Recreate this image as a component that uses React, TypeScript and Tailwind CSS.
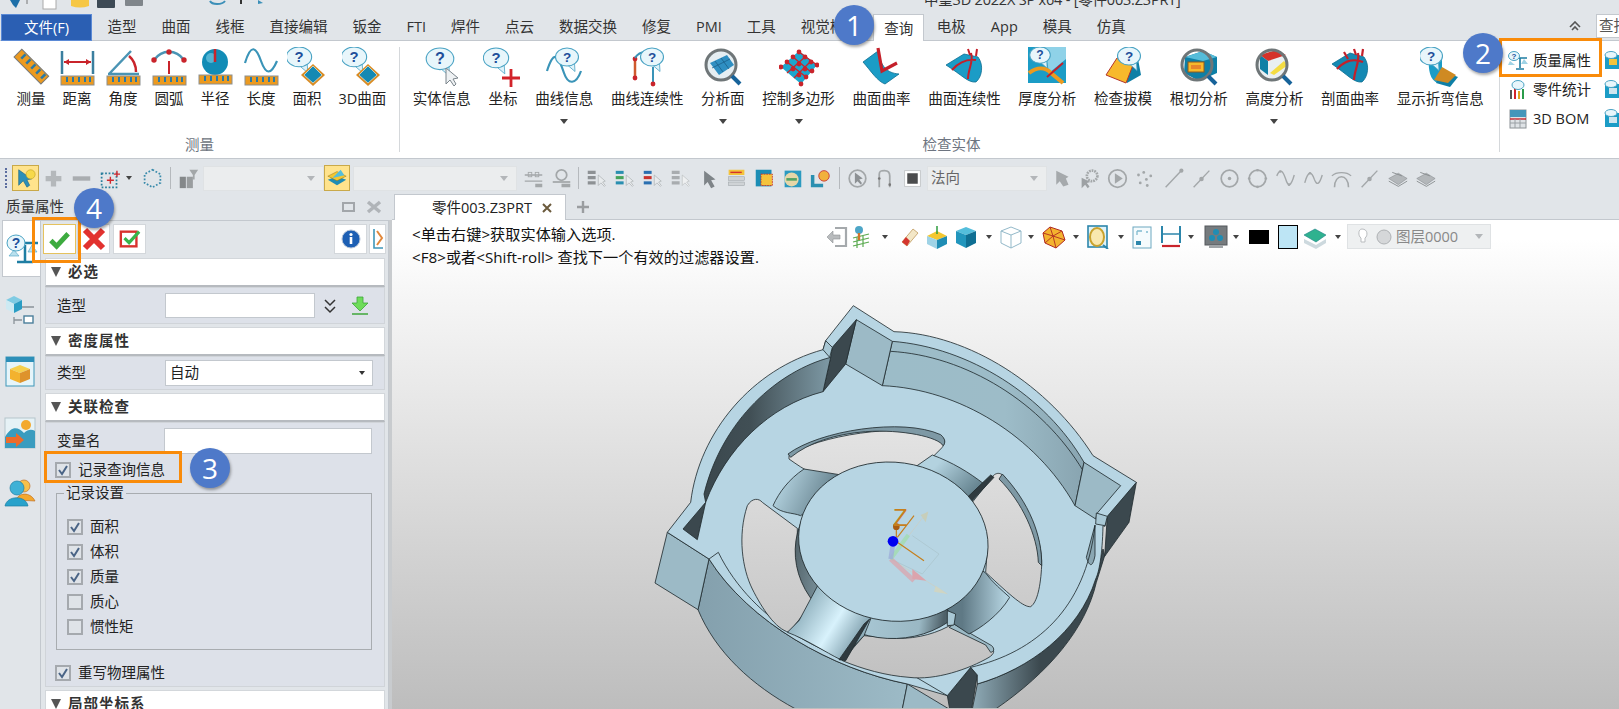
import React from "react";

const Bubble = ({ x = 4, y = 1, r = 10 }: { x?: number; y?: number; r?: number }) => (
  <g>
    <path d={`M${x + r * 1.1} ${y + r * 1.75} l${r * 0.7} ${r * 0.6} l-${r * 0.05} -${r * 0.8} Z`} fill="#dff2f9" stroke="#4aa3c4" strokeWidth="0.8" />
    <ellipse cx={x + r} cy={y + r * 0.9} rx={r * 1.15} ry={r * 0.9} fill="#e8f6fb" stroke="#4aa3c4" strokeWidth="1.1" />
    <text x={x + r} y={y + r * 1.35} textAnchor="middle" fontSize={r * 1.35} fontWeight="700" fill="#214f9a" fontFamily="Liberation Sans, sans-serif">?</text>
  </g>
);
const Ruler = ({ y = 29 }: { y?: number }) => (
  <g>
    <rect x="4" y={y} width="33" height="9" fill="#ec9a1f" stroke="#8c8f90" strokeWidth="1" />
    {[9, 15, 21, 27, 32].map((x) => <rect key={x} x={x} y={y + 1} width="2" height="5" fill="#2879a8" />)}
  </g>
);
const Diamond = () => (
  <g>
    <polygon points="26,17 38,28 26,39 14,28" fill="#d98c24" />
    <polygon points="26,19 35,28 26,36 17,28" fill="#1489b3" stroke="#e7f6fb" strokeWidth="0.6" />
  </g>
);
const Magnifier = ({ children }: { children?: React.ReactNode }) => (
  <g>
    {children}
    <circle cx="18" cy="18" r="15" fill="none" stroke="#6f7678" strokeWidth="3" />
    <path d="M29 29 L37 37" stroke="#17639a" strokeWidth="4" />
  </g>
);

const ribbonIcons: Record<string, React.ReactNode> = {
  measure: (<g transform="rotate(45 20 20)"><rect x="1" y="14" width="38" height="11" fill="#ec9a1f" stroke="#77797a" />{[6, 13, 20, 27, 34].map((x) => <rect key={x} x={x} y="15" width="2.5" height="6" fill="#2879a8" />)}</g>),
  dist: (<g><path d="M5 4 V27 M36 4 V27" stroke="#3b7f9f" strokeWidth="2.5" /><path d="M7 15 H34" stroke="#c9242b" strokeWidth="2" /><path d="M7 15 l5 -3 v6 Z M34 15 l-5 -3 v6 Z" fill="#c9242b" /><Ruler /></g>),
  angle: (<g><path d="M6 27 L28 4 M5 27 H36" stroke="#4a94b4" strokeWidth="2.5" fill="none" /><path d="M26 9 C32 14 33 20 33 25" stroke="#c9242b" strokeWidth="2.5" fill="none" /><Ruler /></g>),
  arc: (<g><path d="M5 13 C13 2 27 2 35 13" stroke="#4a94b4" strokeWidth="2.5" fill="none" /><circle cx="5" cy="13" r="2.7" fill="#c9242b" /><circle cx="35" cy="13" r="2.7" fill="#c9242b" /><circle cx="20" cy="5" r="2.7" fill="#c9242b" /><path d="M20 27 V14" stroke="#c9242b" strokeWidth="2" /><Ruler /></g>),
  radius: (<g><circle cx="20" cy="15" r="13" fill="#128cb6" /><circle cx="16" cy="11" r="5" fill="#7fd0e8" opacity="0.6" /><path d="M20 15 V2" stroke="#c9242b" strokeWidth="2.5" /><Ruler y={28} /></g>),
  length: (<g><path d="M4 16 C10 -4 15 0 20 14 C25 28 30 28 36 14" stroke="#3a94b8" strokeWidth="2.2" fill="none" /><Ruler /></g>),
  area: (<g><Bubble x={1} y={0} r={11} /><Diamond /></g>),
  info: (<g><Bubble x={6} y={1} r={12} /><path d="M24 21 V37 L28 33 L32 39 L34 37 L31 32 L36 31 Z" fill="#eef1f3" stroke="#7b858c" strokeWidth="1" /></g>),
  coord: (<g><Bubble x={2} y={1} r={11} /><path d="M28 22 V40 M19 31 H37" stroke="#d2232a" strokeWidth="2.8" /></g>),
  curve: (<g><path d="M3 24 C10 2 14 8 20 26 C24 38 32 38 37 24" stroke="#3a94b8" strokeWidth="2.2" fill="none" /><Bubble x={13} y={1} r={10} /></g>),
  curvec: (<g><path d="M8 14 V30" stroke="#cf5a2e" strokeWidth="2.5" /><circle cx="8" cy="12" r="2.4" fill="#c9242b" /><circle cx="8" cy="31" r="2.4" fill="#c9242b" /><path d="M8 11 C12 5 16 5 18 5 M26 20 V36" stroke="#3a94b8" strokeWidth="2" fill="none" /><circle cx="26" cy="37" r="2.4" fill="#c9242b" /><Bubble x={15} y={1} r={10} /></g>),
  anaface: (<Magnifier><circle cx="18" cy="18" r="14" fill="#e5eef2" /><path d="M7 16 L24 8 L31 18 L16 28 Z" fill="#2f8fc2" /><path d="M12 14 L20 25 M18 11 L26 22 M9 21 L27 12" stroke="#1b5f8a" strokeWidth="0.8" /></Magnifier>),
  polygon: (<g><path d="M2 20 L20 4 L38 18 L22 37 Z" fill="#1ba7cf" /><path d="M8 15 L27 30 M14 10 L32 25 M20 5 L38 18 M26 10 L8 26 M32 14 L15 31" stroke="#c9242b" strokeWidth="1.3" />{[[2,20],[8,15],[14,10],[20,5],[14,22],[20,17],[26,10],[20,28],[26,22],[32,15],[27,30],[33,24],[38,18],[22,37]].map(([x,y],i)=><circle key={i} cx={x} cy={y} r="2.4" fill="#c9242b" />)}</g>),
  curvature: (<g><path d="M2 15 L17 4 C20 20 26 26 38 27 L24 37 C16 34 10 24 2 15 Z" fill="#1b9cc6" stroke="#0d6d90" strokeWidth="0.8" /><path d="M17 1 L21 24 L36 16" stroke="#c4202a" strokeWidth="3.2" fill="none" /></g>),
  surfc: (<g><path d="M2 18 L20 7 L34 10 C40 18 38 30 32 35 C24 36 18 28 2 18 Z" fill="#1b9cc6" stroke="#0d6d90" strokeWidth="0.8" /><path d="M8 23 C16 14 24 12 32 13 M24 32 C24 22 30 14 27 6 M24 2 L26 8 M33 2 L32 9" stroke="#c4202a" strokeWidth="2" fill="none" /></g>),
  thick: (<g><rect x="1" y="0" width="38" height="36" fill="#1b9cc6" /><path d="M18 0 H39 V12 L22 26 Z" fill="#8fd2e8" /><Bubble x={4} y={0} r={9} /><path d="M2 26 C10 20 18 20 24 26 L36 36" stroke="#ec9a1f" strokeWidth="4" fill="none" /><path d="M20 30 L36 16" stroke="#c4202a" strokeWidth="2" /></g>),
  draft: (<g><path d="M14 8 L35 12 L38 28 L24 36 Z" fill="#0e7fa6" /><polygon points="14,11 30,18 23,36 3,28" fill="#f7b92c" stroke="#b5342a" strokeWidth="1" /><Bubble x={16} y={0} r={10} /></g>),
  under: (<Magnifier><path d="M6 10 L24 4 L38 10 V26 L20 34 L5 26 Z" fill="#0e7fa6" /><path d="M6 10 L24 14 L38 10 L24 4 Z" fill="#55bcd9" /><rect x="9" y="15" width="16" height="10" fill="#f7b92c" stroke="#8f5b1d" /><rect x="12" y="18" width="10" height="4" fill="#e9852a" /></Magnifier>),
  height: (<Magnifier><circle cx="18" cy="18" r="14" fill="#e9eff2" /><path d="M6 8 L22 3 L32 8 L14 14 Z" fill="#d5322a" /><path d="M6 8 L14 14 V28 L6 22 Z" fill="#0e7fa6" /><polygon points="16,26 30,14 34,18 20,28" fill="#f4dc42" /></Magnifier>),
  section: (<g><path d="M2 17 L20 6 L34 10 C40 18 38 30 32 35 C24 36 18 28 2 17 Z" fill="#1489b3" stroke="#0d6d90" strokeWidth="0.8" /><path d="M7 22 C16 12 26 12 33 15 M24 33 C24 24 30 15 28 6 M24 2 L26 8 M33 2 L32 9 M14 5 L18 12" stroke="#c4202a" strokeWidth="2.2" fill="none" /></g>),
  bend: (<g><path d="M9 12 H22 V24 L18 36 C10 34 8 22 9 12 Z" fill="#1b9cc6" /><path d="M22 24 L38 30 L30 40 L16 36 Z" fill="#0e7fa6" /><path d="M22 20 L36 28 L28 36 L14 33 Z" fill="#cf8a22" /><Bubble x={1} y={0} r={10} /></g>),
};

const ribbonItems: { t: string; i: string; arrow?: boolean }[] = [
  { t: "实体信息", i: "info" }, { t: "坐标", i: "coord" }, { t: "曲线信息", i: "curve", arrow: true }, { t: "曲线连续性", i: "curvec" },
  { t: "分析面", i: "anaface", arrow: true }, { t: "控制多边形", i: "polygon", arrow: true }, { t: "曲面曲率", i: "curvature" }, { t: "曲面连续性", i: "surfc" },
  { t: "厚度分析", i: "thick" }, { t: "检查拔模", i: "draft" }, { t: "根切分析", i: "under" }, { t: "高度分析", i: "height", arrow: true },
  { t: "剖面曲率", i: "section" }, { t: "显示折弯信息", i: "bend" },
];
const measureItems = [
  { t: "测量", i: "measure" }, { t: "距离", i: "dist" }, { t: "角度", i: "angle" }, { t: "圆弧", i: "arc" },
  { t: "半径", i: "radius" }, { t: "长度", i: "length" }, { t: "面积", i: "area" }, { t: "3D曲面", i: "area" },
];

const RibbonBtn = ({ t, i, arrow, px }: { t: string; i: string; arrow?: boolean; px: string }) => (
  <div className={`flex flex-col items-center ${px}`}>
    <div className="w-0 h-10 flex justify-center">
      <svg viewBox="0 0 40 40" className="w-10 h-10 shrink-0">{ribbonIcons[i]}</svg>
    </div>
    <span className="mt-[2px] h-5 leading-5 text-[14.5px] text-[#222] whitespace-nowrap">{t}</span>
    {arrow && <span className="mt-[10px] w-0 h-0 border-x-[4px] border-x-transparent border-t-[5px] border-t-[#444]" />}
  </div>
);

const Arrow = () => <span className="w-0 h-0 border-x-[3.5px] border-x-transparent border-t-[4px] border-t-[#444]" />;

const g = "#a3a7a9";
const toolIcons: Record<string, React.ReactNode> = {
  plus: <path d="M12 3 V21 M3 12 H21" stroke="#b4b8bb" strokeWidth="6" />,
  minus: <path d="M2 12 H22" stroke="#a9adb0" strokeWidth="5" />,
  dotted: <g><rect x="3" y="6" width="17" height="16" fill="none" stroke="#2a7f9d" strokeWidth="2" strokeDasharray="2 2" /><path d="M9 14 H17 M13 10 V18 M17 7 H24 M20.5 3 V10" stroke="#cf2a2f" strokeWidth="1.6" /></g>,
  hex: <polygon points="12,2 21,7 21,17 12,22 3,17 3,7" fill="none" stroke="#3a8bab" strokeWidth="2" strokeDasharray="2 2" />,
  filter: <g><rect x="2" y="10" width="7" height="13" fill="#84888a" /><rect x="10" y="10" width="7" height="13" fill="#999d9f" /><path d="M13 2 H23 L19 8 V13 H17 V8 Z" fill={g} /></g>,
  slider: <g><path d="M2 8 H22 M2 15 H22" stroke={g} strokeWidth="1.5" /><rect x="6" y="5" width="4" height="5" fill="none" stroke={g} /><rect x="14" y="5" width="4" height="5" fill="none" stroke={g} /><rect x="14" y="18" width="8" height="4" fill={g} /></g>,
  clock: <g><circle cx="12" cy="8" r="6" fill="none" stroke={g} strokeWidth="2" /><path d="M2 16 H22" stroke={g} strokeWidth="2" /><rect x="12" y="18" width="10" height="4" fill={g} /></g>,
  s1: <g><path d="M2 5 H11 M2 11 H11 M2 17 H11" stroke="#8d9194" strokeWidth="3.5" /><path d="M14 8 V20 L17 17 L21 21 L22 20 L19 16 L22 15 Z" fill="#e8ebed" stroke={g} strokeWidth="0.7" /></g>,
  s2: <g><path d="M2 5 H11" stroke="#2a8fb0" strokeWidth="3.5" /><path d="M2 11 H11" stroke="#46a35a" strokeWidth="3.5" /><path d="M2 17 H11" stroke="#2a8fb0" strokeWidth="3.5" /><path d="M14 8 V20 L17 17 L21 21 L22 20 L19 16 L22 15 Z" fill="#e8ebed" stroke={g} strokeWidth="0.7" /></g>,
  s3: <g><path d="M2 5 H11" stroke="#2a6fb0" strokeWidth="3.5" /><path d="M2 11 H11" stroke="#c9342f" strokeWidth="3.5" /><path d="M2 17 H11" stroke="#2a6fb0" strokeWidth="3.5" /><path d="M14 8 V20 L17 17 L21 21 L22 20 L19 16 L22 15 Z" fill="#e8ebed" stroke={g} strokeWidth="0.7" /></g>,
  s4: <g><path d="M2 5 H11 M2 11 H11 M2 17 H11" stroke="#a8acaf" strokeWidth="3.5" /><path d="M14 8 V20 L17 17 L21 21 L22 20 L19 16 L22 15 Z" fill="#eef0f1" stroke="#b7babc" strokeWidth="0.7" /></g>,
  cursor: <path d="M7 3 V20 L11 16 L15 23 L19 21 L15 14 L20 13 Z" fill="#7e8488" />,
  table: <g><rect x="3" y="2" width="18" height="6" fill="#f4c33c" /><path d="M5 5 H18" stroke="#d4332d" strokeWidth="1.6" /><rect x="3" y="10" width="18" height="4" fill="#cfd3d6" stroke="#9aa0a4" strokeWidth="0.6" /><rect x="3" y="16" width="18" height="4" fill="#cfd3d6" stroke="#9aa0a4" strokeWidth="0.6" /></g>,
  box1: <g><rect x="2" y="2" width="18" height="19" fill="#1b8db5" /><rect x="8" y="7" width="13" height="13" fill="#f4c33c" stroke="#c9342f" strokeDasharray="2 1" /></g>,
  box2: <g><rect x="3" y="3" width="19" height="19" fill="#2b9ac0" /><circle cx="11" cy="13" r="8" fill="#e6d7a8" /><path d="M5 13 H17" stroke="#53a364" strokeWidth="3" /></g>,
  box3: <g><path d="M3 8 V20 H15" stroke="#2a8fb0" strokeWidth="4" fill="none" /><circle cx="16" cy="9" r="6" fill="#f1b13c" stroke="#c9342f" /></g>,
  compass: <g><circle cx="12" cy="12" r="9.5" fill="none" stroke={g} strokeWidth="2" /><path d="M9 5 V18 L12 15 L16 19 L17 17 L14 13 L18 12 Z" fill="#8d9194" /></g>,
  bracket: <g><path d="M6 22 V7 C6 3 9 3 12 3 C16 3 18 5 18 9 V22" fill="none" stroke={g} strokeWidth="2" /><circle cx="6" cy="12" r="1.5" fill="#777" /><circle cx="18" cy="19" r="1.5" fill="#777" /></g>,
  stop: <g><rect x="3" y="3" width="18" height="18" fill="#fff" stroke="#c1c4c6" /><rect x="6" y="6" width="12" height="12" fill="#4b4c4d" /></g>,
  arrowHand: <path d="M6 3 V19 L10 15 L14 21 L20 19 L17 12 L20 10 Z" fill="#a5a9ac" />,
  gear: <g><circle cx="15" cy="9" r="6" fill="none" stroke={g} strokeWidth="3" strokeDasharray="2 1" /><path d="M3 11 V23 L7 19 L10 23 L12 21 L9 17 L13 16 Z" fill="#9da1a4" /></g>,
  play: <g><circle cx="12" cy="12" r="10" fill="none" stroke={g} strokeWidth="2" /><path d="M9 6 L18 12 L9 18 Z" fill={g} /></g>,
  dots: <g>{[[4, 8], [10, 5], [18, 9], [6, 17], [13, 13], [14, 20]].map(([x, y], i) => <circle key={i} cx={x} cy={y} r="1.6" fill={g} />)}</g>,
  line: <g><path d="M3 22 L20 4" stroke={g} strokeWidth="1.6" /><circle cx="21" cy="3" r="2.4" fill={g} /></g>,
  midline: <g><path d="M3 22 L21 3" stroke={g} strokeWidth="1.6" /><circle cx="12" cy="12.5" r="2.6" fill={g} /></g>,
  center: <g><circle cx="12" cy="12" r="9.5" fill="none" stroke={g} strokeWidth="2" /><circle cx="12" cy="12" r="2" fill={g} /></g>,
  circ: <g><circle cx="12" cy="12" r="9.5" fill="none" stroke={g} strokeWidth="2" /><circle cx="12" cy="2.5" r="1.5" fill={g} /><circle cx="2.5" cy="12" r="1.5" fill={g} /><circle cx="21.5" cy="12" r="1.5" fill={g} /><circle cx="12" cy="21.5" r="1.5" fill={g} /></g>,
  wave: <g><path d="M2 9 C6 0 9 3 12 12 C15 22 18 22 22 8" fill="none" stroke={g} strokeWidth="1.6" /><circle cx="6" cy="4" r="1.5" fill={g} /><circle cx="16" cy="19" r="1.5" fill={g} /></g>,
  wave2: <g><path d="M2 17 C6 2 10 4 13 13 C16 21 19 18 22 8" fill="none" stroke={g} strokeWidth="1.6" /><circle cx="8" cy="6" r="1.5" fill={g} /></g>,
  archT: <g><path d="M4 22 C4 6 20 6 20 22" fill="none" stroke={g} strokeWidth="1.8" /><path d="M1 9 C6 4 18 4 23 9" fill="none" stroke={g} strokeWidth="1.5" /></g>,
  pages: <g><path d="M2 12 L13 6 L23 12 L13 19 Z" fill="#b3b7ba" stroke="#85898c" strokeWidth="0.6" /><path d="M2 15 L13 21 L23 15" fill="none" stroke="#85898c" /><path d="M6 5 L17 9" stroke="#85898c" /></g>,
};
const Tool = ({ i, w = "w-[28px]" }: { i: string; w?: string }) => (
  <div className={`${w} shrink-0 flex justify-center`}>
    <svg viewBox="0 0 24 24" className="w-[21px] h-[21px]">{toolIcons[i]}</svg>
  </div>
);
const Sep = ({ w }: { w: string }) => (
  <div className={`${w} shrink-0 flex justify-center`}><div className="w-px h-[22px] bg-[#b5b9bd]" /></div>
);
const Combo = ({ w, children }: { w: string; children?: React.ReactNode }) => (
  <div className={`${w} shrink-0 h-[25px] bg-[#ebedee] border border-[#dfe2e4] flex items-center justify-between pl-[3px] pr-[8px]`}>
    <span className="text-[14.5px] text-[#666]">{children}</span>
    <span className="w-0 h-0 border-x-[4px] border-x-transparent border-t-[5px] border-t-[#b3b6b9]" />
  </div>
);

const vtIcons: Record<string, React.ReactNode> = {
  door: <g><path d="M10 3 H21 V21 H10" fill="none" stroke="#a5a9ac" strokeWidth="2.2" /><path d="M2 12 L8 6 V10 H15 V14 H8 V18 Z" fill="#b8bbbd" stroke="#8e9295" strokeWidth="0.6" /></g>,
  person: <g><path d="M4 13 L20 9 M4 17 L20 13 M4 21 L20 17 M8 12 V23 M14 11 V22" stroke="#5aaa4f" strokeWidth="1.2" /><circle cx="10" cy="5" r="4" fill="#4ea6c7" /><path d="M10 8 V15" stroke="#d0752a" strokeWidth="2.4" /></g>,
  eraser: <g><path d="M5 17 L16 4 L21 8 L10 21 Z" fill="#f3e7c7" stroke="#b78e4a" strokeWidth="0.7" /><path d="M5 17 L9 12 L13 16 L10 21 Z" fill="#d4352e" /></g>,
  ycube: <g><polygon points="12,6 22,11 12,15 2,11" fill="#f4c72f" /><polygon points="2,11 12,15 12,24 2,19" fill="#9fd3e6" /><polygon points="22,11 12,15 12,24 22,19" fill="#1f8db4" /><path d="M12 1 V9" stroke="#2e9c3e" strokeWidth="1.5" /></g>,
  bcube: <g><polygon points="12,2 22,6 12,10 2,6" fill="#54bedc" /><polygon points="2,6 12,10 12,23 2,18" fill="#2296bd" /><polygon points="22,6 12,10 12,23 22,18" fill="#0f6f93" /></g>,
  wire: <g><polygon points="12,2 22,6 22,18 12,23 2,18 2,6" fill="#fff" stroke="#93b9c9" /><path d="M2 6 L12 10 L22 6 M12 10 V23" stroke="#93b9c9" fill="none" /></g>,
  poly: <g><polygon points="8,2 20,6 23,15 14,23 3,18 1,8" fill="#f3b32f" stroke="#b02a22" /><path d="M11 11 L8 2 M11 11 L20 6 M11 11 L23 15 M11 11 L14 23 M11 11 L3 18 M11 11 L1 8" stroke="#b02a22" strokeWidth="0.9" /></g>,
  search: <g><rect x="2" y="1" width="19" height="21" fill="#dff3fa" stroke="#2c86ab" strokeWidth="1.6" /><ellipse cx="11" cy="12" rx="7" ry="9" fill="#f9e8ae" stroke="#c9a22d" strokeWidth="2" /><path d="M17 20 L22 24" stroke="#2c86ab" strokeWidth="2" /></g>,
  doc: <g><rect x="3" y="2" width="18" height="21" fill="#f5fbfd" stroke="#6ca8c0" /><path d="M7 6 H12 M16 7 H18 M7 6 V10" stroke="#7fbad0" strokeWidth="1.3" /><rect x="6" y="16" width="5" height="4" fill="#2c86ab" /></g>,
  dim: <g><path d="M3 1 V18 M21 1 V18" stroke="#2c86ab" strokeWidth="2" /><path d="M4 9 H20" stroke="#2c86ab" strokeWidth="1.5" /><path d="M3 21 H21" stroke="#c9242b" strokeWidth="2.2" /></g>,
  monitor: <g><rect x="1" y="1" width="22" height="19" fill="#767b7e" stroke="#55595c" /><circle cx="12" cy="7" r="3" fill="#1f8db4" /><circle cx="8" cy="13" r="3" fill="#1f8db4" /><circle cx="16" cy="13" r="3" fill="#1f8db4" /><rect x="5" y="20" width="14" height="3" fill="#a0a4a7" /></g>,
  layers: <g><path d="M1 14 L13 20 L23 14 V18 L13 24 L1 18 Z" fill="#cdd9de" /><path d="M1 10 L12 4 L23 10 L13 17 Z" fill="#2fb28f" stroke="#1e7f87" strokeWidth="0.6" /></g>,
};
const VT = ({ i, w }: { i: string; w: string }) => (
  <div className={`${w} shrink-0 flex justify-center`}>
    <svg viewBox="0 0 24 24" className="w-[24px] h-[24px] shrink-0">{vtIcons[i]}</svg>
  </div>
);
const VA = ({ w }: { w: string }) => <div className={`${w} shrink-0 flex justify-center`}><Arrow /></div>;

const Section = ({ title }: { title: string }) => (
  <div className="ml-[4px] w-[340px]">
    <div className="h-[29px] bg-white border border-[#d3d7db] border-b-2 border-b-[#b6babf] flex items-center pl-[5px]">
      <span className="w-0 h-0 border-x-[5.5px] border-x-transparent border-t-[10px] border-t-[#555] mr-[7px]" />
      <span className="text-[14.5px] font-bold tracking-[1px] text-[#333]">{title}</span>
    </div>
  </div>
);

const Check = ({ on = true }: { on?: boolean }) => (
  <span className="w-4 h-4 shrink-0 border-2 border-[#a5a9ae] bg-[#dfe3e8] flex items-center justify-center">
    {on && <svg viewBox="0 0 12 12" className="w-3 h-3"><path d="M2 6 L5 10 L10 2" fill="none" stroke="#4a6486" strokeWidth="2" /></svg>}
  </span>
);

const Badge = ({ n, className }: { n: number; className: string }) => (
  <div className={`absolute w-10 h-10 rounded-full bg-[#4e79c9] text-white text-[28px] leading-10 text-center shadow-[1px_2px_3px_rgba(0,0,0,0.35)] ${className}`}>{n}</div>
);

const SideIcon = ({ children, className }: { children: React.ReactNode; className: string }) => (
  <svg viewBox="0 0 32 32" className={`w-8 h-8 ${className}`}>{children}</svg>
);

const Model = () => (
  <svg viewBox="0 0 1560 1257" className="absolute left-[227px] top-[69px] w-[520px] h-[419px]">
    <defs>
      <linearGradient id="hole" gradientUnits="userSpaceOnUse" x1="0" y1="0" x2="0" y2="1257"><stop offset="0" stopColor="#f6f6f6" /><stop offset="1" stopColor="#bdbdbd" /></linearGradient>
      <linearGradient id="darkw" gradientUnits="userSpaceOnUse" x1="1060" y1="0" x2="1300" y2="0"><stop offset="0" stopColor="#8fabb7" /><stop offset="0.85" stopColor="#3b484e" /><stop offset="1" stopColor="#3b484e" /></linearGradient>
      <linearGradient id="lwall" gradientUnits="userSpaceOnUse" x1="260" y1="0" x2="640" y2="0"><stop offset="0" stopColor="#3b484e" /><stop offset="0.35" stopColor="#414f55" /><stop offset="1" stopColor="#7f9ba7" /></linearGradient>
      <linearGradient id="uwall" gradientUnits="userSpaceOnUse" x1="800" y1="0" x2="1400" y2="0"><stop offset="0" stopColor="#9cbcc8" /><stop offset="0.6" stopColor="#9dbcc8" /><stop offset="1" stopColor="#88a4b0" /></linearGradient>
      <linearGradient id="bwall" gradientUnits="userSpaceOnUse" x1="240" y1="0" x2="860" y2="0"><stop offset="0" stopColor="#84a0ad" /><stop offset="1" stopColor="#9cbac6" /></linearGradient>
      <linearGradient id="hub" gradientUnits="userSpaceOnUse" x1="530" y1="0" x2="1000" y2="0"><stop offset="0" stopColor="#55666d" /><stop offset="0.45" stopColor="#a9c8d5" /><stop offset="0.85" stopColor="#9ab8c4" /><stop offset="1" stopColor="#4f6169" /></linearGradient>
      <linearGradient id="spoke" gradientUnits="userSpaceOnUse" x1="540" y1="960" x2="700" y2="1060"><stop offset="0" stopColor="#8fb0bd" /><stop offset="0.6" stopColor="#d8f2fc" /><stop offset="1" stopColor="#8faebb" /></linearGradient>
      <linearGradient id="spoke2" gradientUnits="userSpaceOnUse" x1="470" y1="600" x2="600" y2="660"><stop offset="0" stopColor="#b3d2df" /><stop offset="1" stopColor="#6f8b97" /></linearGradient>
      <linearGradient id="spoke3" gradientUnits="userSpaceOnUse" x1="960" y1="520" x2="1060" y2="620"><stop offset="0" stopColor="#b3d2df" /><stop offset="1" stopColor="#62808c" /></linearGradient>
      <linearGradient id="spoke4" gradientUnits="userSpaceOnUse" x1="1030" y1="960" x2="1160" y2="960"><stop offset="0" stopColor="#5f7985" /><stop offset="1" stopColor="#b3d2df" /></linearGradient>
    </defs>
    <g stroke="#222c30" strokeWidth="2.5" strokeLinejoin="round">
      <path d="M270,810 L237,962 C290,1090 400,1190 530,1260 L850,1260 L865,1185 C640,1140 390,1000 270,810 Z" fill="url(#bwall)" />
      <polygon points="145,730 270,810 237,962 108,882" fill="#9cbac6" />
      <polygon points="865,1185 990,1260 850,1260" fill="#9cbac6" />
      <path d="M1452,780 L1430,870 C1380,1030 1230,1140 1075,1185 L1060,1260 L1130,1260 C1290,1150 1400,1020 1432,880 L1457,800 Z" fill="url(#darkw)" />
      <polygon points="985,1220 1055,1135 1075,1158 1058,1260 992,1260" fill="#3b484e" />
      <polygon points="1552,580 1530,700 1457,802 1465,680" fill="#3b484e" />
      <path d="M703,50 L825,128 C1050,135 1290,290 1422,500 L1552,580 L1465,682 L1458,712 L1452,710 C1450,800 1440,850 1430,870 C1380,1030 1230,1140 1075,1185 L1075,1158 L1055,1135 L985,1220 L865,1185 C640,1140 390,1000 270,810 L145,730 L215,640 C240,430 400,240 612,182 L620,155 Z" fill="#b7d5e3" />
      <path d="M820,157 C1050,175 1280,320 1395,520 L1368,650 C1250,440 1020,300 790,290 Z" fill="url(#uwall)" />
      <path d="M815,187 C1040,200 1270,340 1392,545" fill="none" />
      <polygon points="712,92 820,157 790,290 680,225" fill="#9cbac6" />
      <polygon points="712,92 680,225 612,308 635,205 640,175" fill="#3b484e" />
      <path d="M635,205 C480,245 310,390 255,615 L260,640 C320,480 450,350 612,308 Z" fill="url(#lwall)" />
      <polygon points="1395,520 1505,590 1435,672 1430,690 1368,650" fill="#9cbac6" />
      <polygon points="260,640 235,752 192,720" fill="#3b484e" />
      <polygon points="620,155 640,175 632,205 612,182" fill="#a9c8d5" />
      <polygon points="1432,672 1465,682 1458,710 1430,705" fill="#a9c8d5" />
      <path d="M1428,708 L1402,805 C1410,830 1420,840 1428,800 Z" fill="#8aa6b2" />
      <path d="M270,810 L298,790 C400,1000 640,1130 875,1155 L985,1220" fill="none" />
      <path d="M1055,1135 C1250,1090 1400,960 1428,710" fill="none" />
      <path d="M510,500 C590,440 850,400 965,440 C985,455 975,470 965,480 L915,530 L640,565 C590,565 560,545 510,510 Z" fill="url(#hole)" />
      <path d="M507,495 C600,425 850,385 965,437 C980,450 980,462 972,470 C960,445 850,420 740,428 C650,435 570,460 515,505 Z" fill="#7e99a5" />
      <path d="M1115,570 C1130,545 1150,550 1160,570 C1230,650 1270,750 1268,830 C1265,890 1255,940 1235,953 C1215,955 1180,925 1100,850 L1105,780 L1060,640 Z" fill="url(#hole)" />
      <path d="M1150,555 C1230,640 1270,740 1268,830 L1258,820 C1255,740 1210,640 1140,570 Z" fill="#7e99a5" />
      <path d="M385,650 C400,625 420,628 430,640 L535,718 L535,790 C540,850 570,900 590,930 L510,1030 C470,1020 430,960 400,900 C370,840 355,740 385,650 Z" fill="url(#hole)" />
      <path d="M735,1040 L830,1048 C900,1050 960,1030 1000,1005 L1115,1075 C1130,1085 1125,1095 1110,1105 C1050,1140 950,1175 870,1165 C800,1160 730,1140 670,1115 Z" fill="url(#hole)" />
      <path d="M1005,1005 L1118,1070 C1128,1080 1125,1088 1115,1090 L1100,1068 L990,1015 Z" fill="#9cbac6" />
      <ellipse cx="812" cy="795" rx="284" ry="253" transform="rotate(8 812 795)" fill="url(#hub)" />
      <path d="M555,540 C510,570 480,610 462,650 C490,675 520,670 545,680 L600,640 L680,560 Z" fill="url(#spoke2)" />
      <path d="M940,498 C1000,520 1050,550 1095,585 L1050,632 L1000,640 L880,540 Z" fill="url(#spoke3)" />
      <path d="M1098,850 C1120,880 1150,905 1172,925 C1140,980 1080,1020 1050,1035 L1005,1005 L985,960 L1040,820 Z" fill="url(#spoke4)" />
      <path d="M596,890 L640,880 L760,960 L755,990 L735,1040 L665,1112 C620,1090 560,1050 505,1030 L540,995 Z" fill="url(#spoke)" />
      <path d="M985,965 L1010,975 L1005,1008 L985,1010 Z" fill="#a9c8d5" />
      <path d="M1045,625 L1115,558 L1125,565 L1058,637 Z" fill="#2f3a3f" />
      <path d="M660,1112 L735,1005 L752,990 L680,1115 Z" fill="#2f3a3f" />
      <ellipse cx="823" cy="758" rx="285" ry="238" transform="rotate(8 823 758)" fill="#b7d5e3" />
    </g>
    <g fill="none">
      <path d="M815,810 L925,668 M815,810 L985,915" stroke="#c9cfc6" strokeWidth="2.5" />
      <path d="M880,740 L960,795 L910,855 L815,810" stroke="#a9c2ca" strokeWidth="2" />
      <path d="M815,810 L885,875" stroke="#dba4ad" strokeWidth="14" opacity="0.75" />
      <polygon points="880,840 922,875 880,870" fill="#dba4ad" />
      <path d="M815,810 L868,738" stroke="#9fdcae" strokeWidth="12" opacity="0.75" />
      <polygon points="905,678 928,668 920,700" fill="#c7ceba" />
      <polygon points="950,890 985,915 945,908" fill="#cfd5c4" />
      <path d="M815,810 L822,765" stroke="#9eaedb" strokeWidth="14" opacity="0.8" />
      <path d="M835,760 L915,815 M835,745 L885,680 M832,715 V745" stroke="#c67f1c" strokeWidth="3.5" />
    </g>
    <circle cx="832" cy="713" r="10" fill="#a95c12" />
    <circle cx="822" cy="757" r="16" fill="#0000f0" />
    <text x="822" y="710" fontSize="72" fill="#c67f1c" fontFamily="Liberation Sans, sans-serif">Z</text>
  </svg>
);

export default function App() {
  return (
    <div className="relative w-[1619px] h-[709px] overflow-hidden bg-[#e1e5e9] font-['Open_Sans','Noto_Sans_CJK_SC',sans-serif] text-[#222]">
      {/* title strip */}
      <div className="h-[13px] overflow-hidden flex">
        <svg viewBox="0 0 300 13" className="w-[300px] h-[13px] shrink-0">
          <path d="M10 0 L20 0 L16 8 L13 5 Z" fill="#1d6fa8" />
          <path d="M27 0 V4" stroke="#777" />
          <rect x="43" y="-4" width="13" height="13" fill="#fff" stroke="#aaa" />
          <path d="M71 -2 H89 V6 Q80 9 71 6 Z" fill="#f6c745" />
          <rect x="97" y="-3" width="18" height="11" rx="1" fill="#3d4a55" />
          <rect x="125" y="-3" width="18" height="9" rx="1" fill="#80868b" />
          <path d="M210 1 C212 5 222 5 225 1" fill="none" stroke="#3b8fb8" strokeWidth="2" />
          <path d="M241 0 V4" stroke="#333" strokeWidth="2" />
          <path d="M258 0 L263 3 L258 4 Z" fill="#3b8fb8" />
        </svg>
        <span className="ml-[624px] -mt-[10px] text-[14.5px] leading-5 text-[#333] tracking-[-0.2px] whitespace-pre">中望3D 2022X SP x64 - [零件003.Z3PRT]</span>
      </div>

      {/* tab row */}
      <div className="relative h-[28px] flex items-end border-b border-[#c3c8ce]">
        <div className="w-[91px] h-[27px] ml-px -mb-px bg-[#2b5fb3] border border-[#5b8ad6] text-white text-[14.5px] leading-[25px] text-center">文件(F)</div>
        <div className="ml-[3px] flex h-[27px] items-center text-[14.5px] text-[#333]">
          {["造型", "曲面", "线框", "直接编辑", "钣金", "FTI", "焊件", "点云", "数据交换", "修复", "PMI", "工具", "视觉样式"].map((t) => (
            <span key={t} className="px-[12.5px] whitespace-nowrap">{t}</span>
          ))}
          <span className="ml-[2px] h-[27px] px-[10px] pt-[2px] -mb-px bg-white border-x border-t border-[#c3c8ce] leading-[24px]">查询</span>
          {["电极", "App", "模具", "仿真"].map((t) => (
            <span key={t} className="px-[12.5px] whitespace-nowrap">{t}</span>
          ))}
        </div>
        <svg viewBox="0 0 12 10" className="absolute left-[1569px] top-[8px] w-3 h-[10px]"><path d="M1 6 L6 1 L11 6 M3 9 L6 6 L9 9" fill="none" stroke="#555" strokeWidth="1.6" /></svg>
        <div className="absolute left-[1596px] top-px w-[40px] h-[24px] bg-white border border-[#c3c8ce] pl-[2px] text-[14.5px] leading-[22px] text-[#555] whitespace-nowrap">查找</div>
      </div>

      {/* ribbon */}
      <div className="h-[118px] bg-white border-b border-[#c3c8ce] flex">
        <div className="w-[399px] shrink-0 flex flex-col pl-[8px] pt-[6px]">
          <div className="flex flex-1">{measureItems.map((b) => <RibbonBtn key={b.t} {...b} px="px-[8.5px]" />)}</div>
          <div className="h-5 mb-[3px] pr-[8px] leading-5 text-center text-[14.5px] text-[#6d7480]">测量</div>
        </div>
        <div className="w-px my-[6px] bg-[#d5d8db] shrink-0" />
        <div className="w-[1099px] shrink-0 flex flex-col pl-[4px] pt-[6px]">
          <div className="flex flex-1">{ribbonItems.map((b) => <RibbonBtn key={b.t} {...b} px="px-[8.85px]" />)}</div>
          <div className="h-5 mb-[3px] leading-5 text-center text-[14.5px] text-[#6d7480]">检查实体</div>
        </div>
        <div className="w-px my-[6px] bg-[#d5d8db] shrink-0" />
        <div className="flex flex-col pt-[5px] pl-[8px] gap-0">
          {[
            { t: "质量属性", k: "m" }, { t: "零件统计", k: "s" }, { t: "3D BOM", k: "b" },
          ].map((r) => (
            <div key={r.t} className="h-[29px] flex items-center">
              <svg viewBox="0 0 20 20" className="w-5 h-5 shrink-0">
                {r.k === "m" && <g><path d="M9 7 H19 M12 7 V17 M8 18 H16" stroke="#1f7ea3" strokeWidth="1.6" /><path d="M16 8 L13 13 H20 Z" fill="#9fd3e6" /><path d="M2 10 L0 14 H7 Z" fill="#9fd3e6" /><ellipse cx="6" cy="5" rx="5.5" ry="4.5" fill="#e8f6fb" stroke="#4aa3c4" /><text x="6" y="8" textAnchor="middle" fontSize="8" fontWeight="700" fill="#214f9a" fontFamily="Liberation Sans, sans-serif">?</text></g>}
                {r.k === "s" && <g><rect x="2" y="10" width="2" height="9" fill="#555" /><rect x="6" y="8" width="2" height="11" fill="#d2232a" /><rect x="10" y="11" width="2" height="8" fill="#e2a21f" /><rect x="14" y="9" width="2" height="10" fill="#2a9c4a" /><ellipse cx="10" cy="5" rx="6" ry="4.5" fill="#e8f6fb" stroke="#4aa3c4" /></g>}
                {r.k === "b" && <g><rect x="2" y="1" width="16" height="18" fill="#dfe3e6" stroke="#8c9296" /><rect x="2" y="1" width="16" height="7" fill="#4596ba" /><path d="M2 10 H18" stroke="#c9242b" strokeWidth="1.4" /><path d="M2 14 H18 M7 10 V19 M12 10 V19" stroke="#9aa0a4" /></g>}
              </svg>
              <span className="ml-[5px] w-[70px] text-[14.5px] whitespace-nowrap">{r.t}</span>
              <svg viewBox="0 0 20 20" className="w-5 h-5 shrink-0">
                <rect x="2" y="4" width="16" height="14" fill="#1b9cc6" />
                <rect x="6" y="8" width="8" height="6" fill={r.k === "m" ? "#f4c33c" : "#cfe6ef"} />
                <ellipse cx="8" cy="4" rx="6" ry="3.5" fill="#e8f6fb" stroke="#4aa3c4" />
              </svg>
            </div>
          ))}
        </div>
      </div>

      {/* toolbar */}
      <div className="h-[35px] pt-[3px] flex items-center">
        <div className="w-[12px] flex justify-center shrink-0"><div className="w-[2px] h-[20px] border-l-2 border-dotted border-[#5c6ea0]" /></div>
        <div className="w-[27px] h-[26px] shrink-0 bg-[#ffe38c] border border-[#c9a94a] flex items-center justify-center">
          <svg viewBox="0 0 24 24" className="w-[22px] h-[22px]"><path d="M4 3 V20 L9 15 L13 22 L16 20 L13 14 L18 13 Z" fill="#2d8fb8" stroke="#125d80" strokeWidth="0.6" /><circle cx="17" cy="8" r="5" fill="#f7d94a" stroke="#b99a20" strokeWidth="0.6" /></svg>
        </div>
        <Tool i="plus" /><Tool i="minus" /><Tool i="dotted" />
        <div className="w-[12px] shrink-0 flex justify-center"><Arrow /></div>
        <div className="w-[3px] shrink-0" />
        <Tool i="hex" />
        <Sep w="w-[8px]" />
        <Tool i="filter" />
        <div className="w-px shrink-0" />
        <Combo w="w-[121px]" />
        <div className="w-[26px] h-[26px] shrink-0 bg-[#ffe38c] border border-[#c9a94a] flex items-center justify-center">
          <svg viewBox="0 0 24 24" className="w-[22px] h-[22px]"><polygon points="12,10 22,14 12,20 2,14" fill="#1f8db4" /><polygon points="2,10 12,5 22,10 12,15" fill="#f4c72f" stroke="#8f6f18" strokeWidth="0.5" /><path d="M7 12 L16 3 L20 9" fill="#54bedc" /></svg>
        </div>
        <div className="w-[3px] shrink-0" />
        <Combo w="w-[164px]" />
        <div className="w-[2px] shrink-0" />
        <Tool i="slider" /><Tool i="clock" />
        <Sep w="w-[7px]" />
        <Tool i="s1" /><Tool i="s2" /><Tool i="s3" /><Tool i="s4" /><Tool i="cursor" /><Tool i="table" /><Tool i="box1" /><Tool i="box2" /><Tool i="box3" />
        <Sep w="w-[10px]" />
        <Tool i="compass" w="w-[26px]" /><Tool i="bracket" /><Tool i="stop" />
        <div className="w-px shrink-0" />
        <Combo w="w-[120px]">法向</Combo>
        <Tool i="arrowHand" /><Tool i="gear" /><Tool i="play" /><Tool i="dots" /><Tool i="line" /><Tool i="midline" /><Tool i="center" /><Tool i="circ" /><Tool i="wave" /><Tool i="wave2" /><Tool i="archT" /><Tool i="midline" /><Tool i="pages" /><Tool i="pages" />
      </div>

      {/* workspace */}
      <div className="h-[515px] flex">
        {/* panel */}
        <div className="w-[392px] shrink-0 flex flex-col">
          <div className="h-[26px] shrink-0 flex items-center pl-[6px]">
            <span className="text-[14.5px] text-[#333]">质量属性</span>
            <svg viewBox="0 0 40 14" className="ml-[278px] w-[40px] h-[14px]">
              <rect x="1" y="3" width="11" height="8" fill="none" stroke="#a2a6aa" strokeWidth="2" />
              <path d="M26 2 L38 12 M38 2 L26 12" stroke="#b0b4b8" strokeWidth="3.5" />
            </svg>
          </div>
          <div className="flex-1 flex min-h-0">
            <div className="w-[40px] shrink-0 flex flex-col">
              <div className="ml-[2px] h-[57px] bg-white border border-r-0 border-[#c3c8ce] flex items-center justify-center overflow-hidden">
                <SideIcon className="shrink-0">
                  <path d="M14 10 H32 M19 12 V28 M11 29 H27" stroke="#1f7ea3" strokeWidth="2.5" />
                  <path d="M26 12 L22 19 H31 Z" fill="#b9e0ee" stroke="#4aa3c4" strokeWidth="0.6" />
                  <path d="M8 17 L3 23 H13 Z" fill="#b9e0ee" stroke="#4aa3c4" strokeWidth="0.6" />
                  <ellipse cx="10" cy="10" rx="9" ry="8" fill="#e8f6fb" stroke="#4aa3c4" />
                  <text x="10" y="15" textAnchor="middle" fontSize="14" fontWeight="700" fill="#214f9a" fontFamily="Liberation Sans, sans-serif">?</text>
                </SideIcon>
              </div>
              <div className="h-[63px] flex items-center justify-center">
                <SideIcon className="">
                  <polygon points="10,3 18,7 10,11 2,7" fill="#7fcbe3" /><polygon points="2,7 10,11 10,20 2,16" fill="#cdeaf3" /><polygon points="18,7 10,11 10,20 18,16" fill="#2a9dc4" />
                  <path d="M18 14 H30 M10 24 V31 M10 27 H18" stroke="#8a9399" strokeWidth="1.3" /><rect x="20" y="23" width="9" height="7" fill="#fff" stroke="#4a7f9b" strokeWidth="1.4" />
                </SideIcon>
              </div>
              <div className="h-[64px] flex items-center justify-center">
                <SideIcon className="">
                  <rect x="2" y="1" width="28" height="29" fill="#e6f5fa" stroke="#3f97b9" /><rect x="2" y="1" width="28" height="5" fill="#2d8fb8" />
                  <polygon points="16,9 26,13 16,17 6,13" fill="#f6d04d" /><polygon points="6,13 16,17 16,27 6,23" fill="#f3b22e" /><polygon points="26,13 16,17 16,27 26,23" fill="#de932c" />
                </SideIcon>
              </div>
              <div className="h-[57px] flex items-center justify-center">
                <SideIcon className="">
                  <rect x="1" y="1" width="30" height="30" fill="#e6f2f6" stroke="#b5c5cc" />
                  <path d="M1 20 C8 8 14 10 20 16 C24 12 28 12 31 14 V31 H1 Z" fill="#3a9cbf" />
                  <circle cx="22" cy="8" r="5" fill="#f3a92e" />
                  <path d="M2 20 H12 V16 L20 23 L12 30 V26 H2 Z" fill="#ec6c2b" />
                </SideIcon>
              </div>
              <div className="h-[63px] flex items-center justify-center">
                <SideIcon className="">
                  <circle cx="20" cy="9" r="6" fill="#f6c04a" stroke="#c0712a" strokeWidth="0.7" /><path d="M12 23 C14 16 26 14 31 24 Z" fill="#f3a82e" stroke="#c0712a" strokeWidth="0.7" />
                  <circle cx="13" cy="11" r="7" fill="#3fb1d6" stroke="#1c7ea3" strokeWidth="0.7" /><path d="M1 29 C3 18 22 18 24 29 Z" fill="#28a2cb" stroke="#1c7ea3" strokeWidth="0.7" />
                </SideIcon>
              </div>
            </div>
            <div className="w-[349px] shrink-0 border-l border-r border-t border-[#c3c8ce] pt-[3px]">
              {/* action row */}
              <div className="h-[30px] flex items-center pl-[2px] pr-[2px]">
                <div className="w-[33px] h-[30px] bg-white border border-[#e5c25e] flex items-center justify-center">
                  <svg viewBox="0 0 24 24" className="w-[23px] h-[23px]"><path d="M3 13 L9 19 L21 6" fill="none" stroke="#3dab3f" strokeWidth="5" /></svg>
                </div>
                <div className="ml-px w-[33px] h-[30px] bg-white border border-[#d3d7db] flex items-center justify-center">
                  <svg viewBox="0 0 24 24" className="w-[24px] h-[24px]"><path d="M3 3 L21 21 M21 3 L3 21" stroke="#e2322f" strokeWidth="6" /></svg>
                </div>
                <div className="ml-[3px] w-[33px] h-[30px] bg-white border border-[#d3d7db] flex items-center justify-center">
                  <svg viewBox="0 0 24 24" className="w-[22px] h-[22px]"><rect x="2" y="4" width="17" height="16" fill="none" stroke="#d8322e" strokeWidth="2.6" /><path d="M6 11 L11 16 L22 4" fill="none" stroke="#38b44a" strokeWidth="3.4" /></svg>
                </div>
                <div className="ml-auto w-[33px] h-[30px] bg-white border border-[#d3d7db] flex items-center justify-center">
                  <svg viewBox="0 0 20 20" className="w-[20px] h-[20px]"><circle cx="10" cy="10" r="9" fill="#1d5fb4" stroke="#b5c3d6" /><rect x="8.7" y="8" width="2.6" height="7" fill="#fff" /><circle cx="10" cy="5.5" r="1.6" fill="#fff" /></svg>
                </div>
                <div className="ml-[2px] w-[17px] h-[30px] bg-white border border-[#d3d7db] flex items-center justify-center">
                  <svg viewBox="0 0 14 24" className="w-[14px] h-[24px]"><path d="M3 2 V21 H12" fill="none" stroke="#3f97b9" strokeWidth="1.6" /><path d="M6 4 L11 11 L6 18" fill="none" stroke="#e2883a" strokeWidth="2" /></svg>
                </div>
              </div>
              <div className="mt-[4px]">
                <Section title="必选" />
                <div className="ml-[4px] w-[340px] h-[37px] bg-[#dde1e9] border border-[#d0d4d9] flex items-center">
                  <span className="ml-[11px] w-[108px] text-[14.5px]">造型</span>
                  <div className="w-[150px] h-[25px] bg-white border border-[#c3c8ce]" />
                  <svg viewBox="0 0 14 16" className="ml-[8px] w-[14px] h-4"><path d="M2 2 L7 7 L12 2 M2 9 L7 14 L12 9" fill="none" stroke="#333" strokeWidth="1.5" /></svg>
                  <svg viewBox="0 0 18 20" className="ml-[14px] w-[18px] h-5"><path d="M6 1 H12 V7 H17 L9 15 L1 7 H6 Z" fill="#6edc5a" stroke="#3ea63a" strokeWidth="0.8" /><path d="M1 18 H17" stroke="#3ea63a" strokeWidth="1.5" /></svg>
                </div>
                <div className="mt-[3px]"><Section title="密度属性" /></div>
                <div className="ml-[4px] w-[340px] h-[34px] bg-[#dde1e9] border border-[#d0d4d9] flex items-center">
                  <span className="ml-[11px] w-[108px] text-[14.5px]">类型</span>
                  <div className="w-[208px] h-[26px] bg-white border border-[#c3c8ce] flex items-center justify-between px-[4px] pr-[7px] text-[14.5px]">
                    自动
                    <span className="w-0 h-0 border-x-[3.5px] border-x-transparent border-t-[4px] border-t-[#333]" />
                  </div>
                </div>
                <div className="mt-[3px]"><Section title="关联检查" /></div>
                <div className="ml-[4px] w-[340px] h-[265px] bg-[#dde1e9] border border-[#d0d4d9] flex flex-col">
                  <div className="h-[31px] shrink-0 flex items-end">
                    <span className="ml-[11px] w-[107px] text-[14.5px] leading-[26px]">变量名</span>
                    <div className="w-[208px] h-[26px] bg-white border border-[#c3c8ce]" />
                  </div>
                  <div className="mt-[7px] flex items-center pl-[9px] h-[18px]">
                    <Check /><span className="ml-[7px] text-[14.5px]">记录查询信息</span>
                  </div>
                  <div className="relative mt-[14px] ml-[10px] w-[316px] h-[157px] border border-[#a8acb0] pt-[25px] pl-[10px] flex flex-col gap-[9px]">
                    <span className="absolute left-[7px] -top-[11px] px-[2px] bg-[#dde1e9] text-[14.5px] leading-5">记录设置</span>
                    {[["面积", true], ["体积", true], ["质量", true], ["质心", false], ["惯性矩", false]].map(([t, on]) => (
                      <div key={t as string} className="h-4 flex items-center">
                        <Check on={on as boolean} /><span className="ml-[7px] text-[14.5px]">{t as string}</span>
                      </div>
                    ))}
                  </div>
                  <div className="mt-[14px] flex items-center pl-[9px] h-[18px]">
                    <Check /><span className="ml-[7px] text-[14.5px]">重写物理属性</span>
                  </div>
                </div>
                <div className="mt-[3px]"><Section title="局部坐标系" /></div>
              </div>
            </div>
            <div className="w-[3px] shrink-0 bg-[#c8cbce]" />
          </div>
        </div>

        {/* document */}
        <div className="flex-1 flex flex-col min-w-0">
          <div className="h-[26px] shrink-0 flex items-end border-b border-[#c3c8ce]">
            <div className="ml-[2px] w-[172px] h-[26px] -mb-px bg-white border-x border-t border-[#c3c8ce] flex items-center pl-[37px] text-[14.5px] text-[#222]">
              <span className="whitespace-nowrap">零件003.Z3PRT</span>
              <svg viewBox="0 0 12 12" className="ml-[9px] w-3 h-3"><path d="M2 2 L10 10 M10 2 L2 10" stroke="#6b5a3c" strokeWidth="2" /></svg>
            </div>
            <svg viewBox="0 0 14 14" className="ml-[10px] mb-[5px] w-[14px] h-[14px]"><path d="M7 1 V13 M1 7 H13" stroke="#9a9da0" strokeWidth="2.4" /></svg>
          </div>
          <div className="relative flex-1 bg-[linear-gradient(180deg,#ffffff_0%,#ffffff_4%,#f6f6f6_15%,#bdbdbd_100%)] overflow-hidden">
            <Model />
            <div className="relative flex">
              <div className="w-[432px] shrink-0 pl-[20px] pt-[3px] text-[15.2px] leading-[23px] text-[#111] whitespace-nowrap">
                <div>&lt;单击右键&gt;获取实体输入选项.</div>
                <div>&lt;F8&gt;或者&lt;Shift-roll&gt; 查找下一个有效的过滤器设置.</div>
              </div>
              <div className="flex items-center h-[27px] mt-[3px]">
                <VT i="door" w="w-[25px]" /><VT i="person" w="w-[24px]" /><VA w="w-[23px]" /><VT i="eraser" w="w-[26px]" /><VT i="ycube" w="w-[30px]" /><VT i="bcube" w="w-[28px]" /><VA w="w-[17px]" />
                <VT i="wire" w="w-[28px]" /><VA w="w-[11px]" /><VT i="poly" w="w-[36px]" /><VA w="w-[7px]" /><VT i="search" w="w-[38px]" /><VA w="w-[7px]" /><VT i="doc" w="w-[36px]" /><VT i="dim" w="w-[22px]" /><VA w="w-[18px]" />
                <VT i="monitor" w="w-[32px]" /><VA w="w-[7px]" />
                <div className="w-[40px] shrink-0 flex justify-center"><div className="w-5 h-[14px] bg-black" /></div>
                <div className="w-[18px] shrink-0 flex justify-center"><div className="w-5 h-6 shrink-0 bg-[#bde5f5] border border-black" /></div>
                <VT i="layers" w="w-[36px]" /><VA w="w-[10px]" />
                <div className="ml-[4px] w-[144px] h-[25px] shrink-0 bg-[#eef0f1] border border-[#dfe2e4] flex items-center pl-[9px] pr-[7px]">
                  <svg viewBox="0 0 38 18" className="w-[38px] h-[18px] shrink-0"><path d="M5 1 C1 1 1 8 4 10 V14 H8 V10 C11 8 11 1 5 1 Z" fill="#fff" stroke="#b9bcbf" /><circle cx="27" cy="9" r="7" fill="#d5d7d9" stroke="#aeb1b4" /></svg>
                  <span className="ml-px text-[14.5px] text-[#888]">图层0000</span>
                  <span className="ml-auto w-0 h-0 border-x-[4px] border-x-transparent border-t-[5px] border-t-[#b3b6b9]" />
                </div>
              </div>
            </div>
          </div>
        </div>
      </div>

      {/* annotations */}
      <div className="absolute left-[1499px] top-[38px] w-[103px] h-[39px] border-[3px] border-[#f98b0a]" />
      <div className="absolute left-[44px] top-[451px] w-[138px] h-[32px] border-[3px] border-[#f98b0a]" />
      <div className="absolute left-[32px] top-[217px] w-[49px] h-[46px] border-[3px] border-[#f98b0a]" />
      <Badge n={1} className="left-[834px] top-[5px]" />
      <Badge n={2} className="left-[1463px] top-[33px]" />
      <Badge n={3} className="left-[190px] top-[448px]" />
      <Badge n={4} className="left-[74px] top-[188px]" />
    </div>
  );
}
